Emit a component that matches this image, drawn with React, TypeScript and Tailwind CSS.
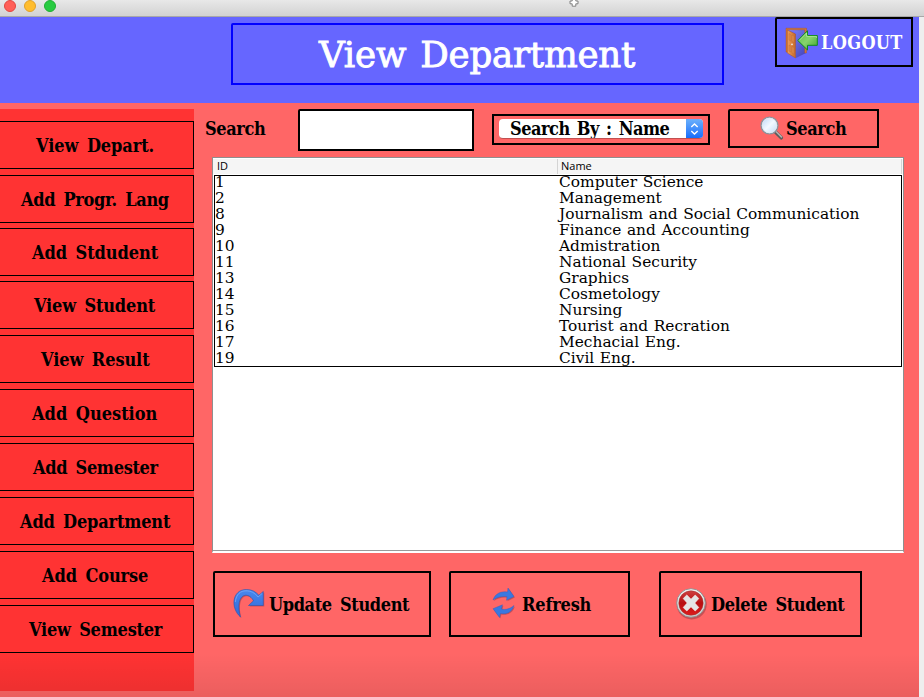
import type { ReactNode } from "react";

const condensed = "font-['DejaVu_Serif_Condensed','DejaVu_Serif',serif] [font-stretch:condensed]";
const wide = "font-['DejaVu_Serif',serif] [font-stretch:normal]";

const menu = [
  { label: "View Depart.", gap: "mb-[6px]", pad: "pl-[36px]", track: "tracking-[-0.08px]" },
  { label: "Add Progr. Lang", gap: "mb-[5px]", pad: "pl-[21px]", track: "tracking-[-0.33px]" },
  { label: "Add Stdudent", gap: "mb-[5px]", pad: "pl-[32px]", track: "tracking-[-0.08px]" },
  { label: "View Student", gap: "mb-[6px]", pad: "pl-[34px]", track: "tracking-[-0.17px]" },
  { label: "View Result", gap: "mb-[6px]", pad: "pl-[41px]", track: "tracking-[-0.09px]" },
  { label: "Add Question", gap: "mb-[6px]", pad: "pl-[32px]", track: "tracking-[0px]" },
  { label: "Add Semester", gap: "mb-[6px]", pad: "pl-[33px]", track: "tracking-[-0.33px]" },
  { label: "Add Department", gap: "mb-[6px]", pad: "pl-[20px]", track: "tracking-[-0.18px]" },
  { label: "Add Course", gap: "mb-[6px]", pad: "pl-[42px]", track: "tracking-[-0.1px]" },
  { label: "View Semester", gap: "", pad: "pl-[29px]", track: "tracking-[-0.23px]" },
];

const rows = [
  { id: "1", name: "Computer Science" },
  { id: "2", name: "Management" },
  { id: "8", name: "Journalism and Social Communication" },
  { id: "9", name: "Finance and Accounting" },
  { id: "10", name: "Admistration" },
  { id: "11", name: "National Security" },
  { id: "13", name: "Graphics" },
  { id: "14", name: "Cosmetology" },
  { id: "15", name: "Nursing" },
  { id: "16", name: "Tourist and Recration" },
  { id: "17", name: "Mechacial Eng." },
  { id: "19", name: "Civil Eng." },
];

function DoorIcon() {
  return (
    <svg width="33" height="32" viewBox="0 0 33 32" className="shrink-0">
      <defs>
        <linearGradient id="leaf" x1="0" x2="1">
          <stop offset="0" stopColor="#f0a05a" />
          <stop offset="1" stopColor="#c4682a" />
        </linearGradient>
        <linearGradient id="exit" x1="0" y1="0" x2="1" y2="1">
          <stop offset="0" stopColor="#5fc04a" />
          <stop offset=".5" stopColor="#86d36c" />
          <stop offset="1" stopColor="#3ea52c" />
        </linearGradient>
        <linearGradient id="room" x1="0" y1="0" x2="1" y2="1">
          <stop offset="0" stopColor="#8088ff" />
          <stop offset="1" stopColor="#4242b8" />
        </linearGradient>
      </defs>
      <path d="M2 2H21V26L11 31V5L2 3Z" fill="url(#room)" />
      <path d="M1 25V1.2H21.5V26H19.8V2.8H2.5V25Z" fill="#d9772f" stroke="#a9531b" strokeWidth=".4" />
      <path d="M2.3 3L10.5 7V31L2.3 26Z" fill="url(#leaf)" stroke="#a9541e" strokeWidth=".5" />
      <path d="M4 6.5L5.8 7.5V14L4 13ZM7 8L8.9 9V15.500L7 14.500ZM4 18L5.800 19V25L4 24ZM7 19.500L8.900 20.500V27L7 26Z" fill="#dc8c4a" stroke="#b9662c" strokeWidth=".35" />
      <circle cx="7" cy="17.300" r=".9" fill="#eee" />
      <path d="M12.800 13.500L22.500 3.700V8.500H32.300V18.300H22.500V23Z" fill="url(#exit)" stroke="#0f8a1c" strokeWidth="1" />
      <path d="M14.500 13.200L21.600 6V9.400H31.400V11" fill="none" stroke="#b8eda5" strokeWidth=".7" />
    </svg>
  );
}

function MagnifierIcon() {
  return (
    <svg width="24" height="25" viewBox="0 0 24 25" className="shrink-0">
      <defs>
        <linearGradient id="glass" x1="0" y1="0" x2="1" y2="1">
          <stop offset="0" stopColor="#b9d5f6" />
          <stop offset=".5" stopColor="#f2f8ff" />
          <stop offset="1" stopColor="#bdd8f7" />
        </linearGradient>
      </defs>
      <path d="M15.500 16L21.300 21.800" stroke="#5c5c5c" strokeWidth="3.600" strokeLinecap="round" />
      <path d="M16 15.500L21.500 21" stroke="#b4b4b4" strokeWidth="1.500" strokeLinecap="round" />
      <circle cx="9.500" cy="9.500" r="8.400" fill="url(#glass)" stroke="#8b929c" strokeWidth="1.400" />
      <circle cx="9.500" cy="9.500" r="7.300" fill="none" stroke="#dfe6ee" strokeWidth=".8" />
    </svg>
  );
}

function RedoIcon() {
  const shape =
    "M7.500 29C-2.500 20.500 -1.500 1.500 13.500 1.500C19 1.500 22.800 3.800 25.800 7.300L30.300 3.500V17.500H15.500L20.500 12.800C18.500 9.300 16 7 12.500 7.300C5.500 8 4.500 19 7.500 29Z";
  return (
    <svg width="32" height="32" viewBox="0 0 32 32" className="shrink-0">
      <defs>
        <linearGradient id="redo" x1="0" y1="0" x2="0" y2="1">
          <stop offset="0" stopColor="#4a88ee" />
          <stop offset="1" stopColor="#2f68d8" />
        </linearGradient>
      </defs>
      <path d={shape} transform="translate(1 1)" fill="#803040" opacity=".4" />
      <path d={shape} fill="url(#redo)" stroke="#2a52ad" strokeWidth=".6" />
      <path d="M2.300 14C3.300 6 7.500 2.800 13 2.800C18.500 2.800 21.500 5 25 9L29 5.500" fill="none" stroke="#7fb0f8" strokeWidth=".7" />
    </svg>
  );
}

function RefreshIcon() {
  const top = "M1 13C3 7 8.500 3.800 15.500 5L16 1L22 9.500L14.500 13.300L15 9.800C9.500 8.800 5 10.500 1 13Z";
  const bottom = "M22 18.500C20 25 15 27.700 8.500 26.500L7.500 30.500L1 21.700L10.500 17.800L9.300 22C14 23.200 18.500 21.500 22 18.500Z";
  return (
    <svg width="24" height="32" viewBox="0 0 24 32" className="shrink-0">
      <g transform="translate(.9 1)" fill="#803040" opacity=".4">
        <path d={top} />
        <path d={bottom} />
      </g>
      <g fill="#3a78e0" stroke="#2a5cc0" strokeWidth=".4">
        <path d={top} />
        <path d={bottom} />
      </g>
    </svg>
  );
}

function DeleteIcon() {
  return (
    <svg width="32" height="33" viewBox="0 0 32 33" className="shrink-0">
      <defs>
        <linearGradient id="ring" x1="0" y1="0" x2="0" y2="1">
          <stop offset="0" stopColor="#f4f4f4" />
          <stop offset="1" stopColor="#c8c8c8" />
        </linearGradient>
        <linearGradient id="disc" x1="0" y1="0" x2="0" y2="1">
          <stop offset="0" stopColor="#cf4040" />
          <stop offset=".5" stopColor="#b80f12" />
          <stop offset="1" stopColor="#dd1c1c" />
        </linearGradient>
      </defs>
      <circle cx="15.700" cy="16.500" r="15" fill="#70303a" opacity=".4" />
      <circle cx="15" cy="15" r="14.300" fill="url(#ring)" stroke="#8d8d8d" strokeWidth=".9" />
      <circle cx="15" cy="15" r="12.200" fill="url(#disc)" stroke="#9d3030" strokeWidth=".5" />
      <path transform="translate(.5 0)" d="M6.700 10.500L10.300 7L14.500 11.200L18.700 7L22.300 10.500L18.300 15L22.300 19.500L18.700 23L14.500 18.800L10.300 23L6.700 19.500L10.700 15Z" fill="#e4e4e4" stroke="#f6f6f6" strokeWidth=".6" />
    </svg>
  );
}

function ActionButton({ className, children }: { className: string; children: ReactNode }) {
  return (
    <button
      className={`flex h-[66px] items-start rounded-tl-[2px] border-2 border-black text-left [word-spacing:3px] ${className}`}
    >
      {children}
    </button>
  );
}

export default function App() {
  return (
    <div className={`relative flex h-[697px] w-[924px] flex-col overflow-hidden bg-[#eeeeee] text-black ${condensed}`}>
      <div className="flex h-[17px] shrink-0 gap-[8px] border-b border-[#a8a8a8] bg-linear-to-b from-[#e8e8e8] to-[#d2d2d2] pl-[4px]">
        <span className="h-[12px] w-[12px] rounded-full border border-[#e2463f] bg-[#ff5f57]" />
        <span className="h-[12px] w-[12px] rounded-full border border-[#e0a028] bg-[#ffbd2e]" />
        <span className="h-[12px] w-[12px] rounded-full border border-[#1fae33] bg-[#28cb41]" />
        <svg width="10" height="8" viewBox="0 0 10 8" className="ml-[505px]">
          <path d="M3.200 -1V1H1V3.800H3.200V6.200H6.800V3.800H9V1H6.800V-1Z" fill="#fff" stroke="#777" strokeWidth=".9" strokeLinejoin="round" />
        </svg>
      </div>

      <header className="flex h-[86px] w-[919px] shrink-0 items-start bg-[#6666ff] text-white">
        <h1
          className={`mt-[6px] ml-[231px] h-[62px] w-[493px] rounded-tl-[2px] border-2 border-[#0000ff] pt-px pl-[86px] text-[35.6px] leading-[58px] tracking-[-0.2px] whitespace-nowrap [word-spacing:3px] [-webkit-text-stroke:0.9px_white] ${wide}`}
        >
          View Department
        </h1>
        <button className="ml-[51px] flex h-[50px] w-[138px] items-start rounded-tl-[2px] border-2 border-black pt-[8px] pl-[8px]">
          <DoorIcon />
          <span className="mt-px ml-[3px] text-[18px] leading-[30px] font-bold tracking-[0.35px]">LOGOUT</span>
        </button>
      </header>

      <div className="flex h-[594px] w-[919px] shrink-0 bg-[#ff6666]">
        <nav className="mt-[6px] h-[582px] w-[194px] shrink-0 bg-[#ff3333] pt-[12px]">
          {menu.map((m) => (
            <button
              key={m.label}
              className={`block h-[48px] w-[194px] border border-l-0 border-black pt-px text-left text-[18px] leading-[45px] font-bold whitespace-nowrap [word-spacing:3px] ${m.gap} ${m.pad} ${m.track}`}
            >
              {m.label}
            </button>
          ))}
        </nav>

        <main className="flex flex-col">
          <div className="flex h-[54px] items-start pt-[6px] pl-[11px] text-[18px] font-bold">
            <label className="w-[93px] pt-px leading-[38px] tracking-[-0.4px]">Search</label>
            <input className="h-[42px] w-[176px] rounded-tl-[2px] border-2 border-black bg-white" />
            <div className="mt-[5px] ml-[18px] h-[31px] w-[218px] border-2 border-black p-[3px] pl-[5px]">
              <div className="flex h-[20px] w-[204px] overflow-hidden rounded-[4px] border-b border-[#c05050] bg-white">
                <span className="w-[187px] pl-[11px] leading-[19px] tracking-[-0.5px] whitespace-nowrap [word-spacing:2px]">
                  Search By : Name
                </span>
                <span className="flex h-[20px] w-[17px] items-center justify-center bg-linear-to-b from-[#6bb0fb] to-[#0f68fb]">
                  <svg width="9" height="12" viewBox="0 0 9 12" fill="none" stroke="#fff" strokeWidth="1.400">
                    <path d="M1.300 4L4.500 1L7.700 4M1.300 8L4.500 11L7.700 8" />
                  </svg>
                </span>
              </div>
            </div>
            <button className="ml-[18px] flex h-[39px] w-[151px] items-start rounded-tl-[2px] border-2 border-black pt-[5px] pl-[30px]">
              <MagnifierIcon />
              <span className="mt-px ml-[2px] leading-[24px] tracking-[-0.4px]">Search</span>
            </button>
          </div>

          <section className="ml-[18px] flex h-[396px] w-[692px] flex-col border border-b-2 border-[#8f8f8f] border-b-white bg-white">
            <div className="mt-px flex h-[15px] w-[690px] shrink-0 bg-[#f5f5f5] font-['Open_Sans','Noto_Sans',sans-serif] text-[11px] leading-[13px] font-medium [font-stretch:normal]">
              <span className="w-[345px] border-r border-[#d4d4d4] pl-[4px]">ID</span>
              <span className="w-[344px] border-r border-[#d4d4d4] pl-[3px]">Name</span>
            </div>
            <div className={`mt-px ml-px h-[192px] w-[688px] shrink-0 border border-black text-[15.4px] [word-spacing:0.7px] ${wide}`}>
              {rows.map((r) => (
                <div key={r.id} className="-mt-px mb-px flex h-[16px] overflow-hidden leading-[14px] whitespace-nowrap">
                  <span className="w-[344px]">{r.id}</span>
                  <span>{r.name}</span>
                </div>
              ))}
            </div>
            <div className="mt-auto h-px w-full shrink-0 bg-[#9a9a9a]" />
          </section>

          <div className="mt-[18px] ml-[19px] flex text-[18px] font-bold whitespace-nowrap">
            <ActionButton className="w-[218px] pt-[15px] pl-[18px]">
              <RedoIcon />
              <span className="mt-px ml-[4px] leading-[31px] tracking-[-0.38px]">Update Student</span>
            </ActionButton>
            <ActionButton className="ml-[18px] w-[181px] pt-[14px] pl-[41px]">
              <RefreshIcon />
              <span className="mt-px ml-[6px] leading-[33px] tracking-[-0.18px]">Refresh</span>
            </ActionButton>
            <ActionButton className="ml-[29px] w-[203px] pt-[15px] pl-[15px]">
              <DeleteIcon />
              <span className="mt-px ml-[3px] leading-[31px] tracking-[-0.4px]">Delete Student</span>
            </ActionButton>
          </div>
        </main>
      </div>
      <div className="pointer-events-none absolute bottom-0 left-0 h-[44px] w-[919px] bg-linear-to-b from-transparent to-black/8" />
    </div>
  );
}
